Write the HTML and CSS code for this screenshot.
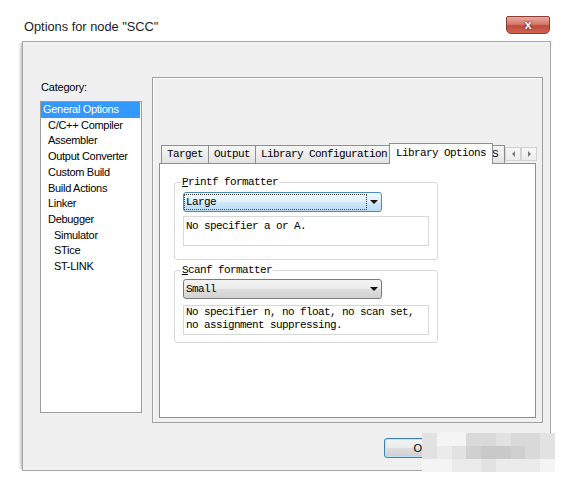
FILE: index.html
```html
<!DOCTYPE html>
<html>
<head>
<meta charset="utf-8">
<title>Options for node "SCC"</title>
<link rel="stylesheet" href="styles.css">
</head>
<body>
<div class="window">
  <div class="titlebar">
    <span class="title">Options for node "SCC"</span>
    <span class="close">x</span>
  </div>
  <div class="client">
    <div class="main">
      <div class="left">
        <div class="cat-label">Category:</div>
        <ul class="list">
          <li class="item sel">General Options</li>
          <li class="item lvl1">C/C++ Compiler</li>
          <li class="item lvl1">Assembler</li>
          <li class="item lvl1">Output Converter</li>
          <li class="item lvl1">Custom Build</li>
          <li class="item lvl1">Build Actions</li>
          <li class="item lvl1">Linker</li>
          <li class="item lvl1">Debugger</li>
          <li class="item lvl2">Simulator</li>
          <li class="item lvl2">STice</li>
          <li class="item lvl2">ST-LINK</li>
        </ul>
      </div>
      <div class="panel">
        <div class="strip">
          <div class="tabs">
            <div class="tab">Target</div>
            <div class="tab">Output</div>
            <div class="tab">Library Configuration</div>
            <div class="tab active">Library Options</div>
            <div class="tab clipped">S</div>
          </div>
          <div class="arrows">
            <span class="arrow arrow-left"></span>
            <span class="arrow arrow-right"></span>
          </div>
        </div>
        <div class="pane">
          <div class="group">
            <div class="legend"><u>P</u>rintf formatter</div>
            <div class="combo focus"><span class="combo-text">Large</span><span class="combo-btn"><i class="caret"></i></span></div>
            <div class="desc">No specifier a or A.</div>
          </div>
          <div class="group scanf">
            <div class="legend"><u>S</u>canf formatter</div>
            <div class="combo"><span class="combo-text">Small</span><span class="combo-btn"><i class="caret"></i></span></div>
            <div class="desc">No specifier n, no float, no scan set,<br>no assignment suppressing.</div>
          </div>
        </div>
      </div>
    </div>
    <div class="buttons">
      <button class="btn default">OK</button>
      <button class="btn">Cancel</button>
    </div>
  </div>
  <div class="mosaic">
    <i class="c"></i><i class="a"></i><i class="a"></i><i class="d"></i><i class="d"></i><i class="c"></i><i class="d"></i><i class="d"></i><i class="c"></i>
    <i class="c"></i><i class="b"></i><i class="c"></i><i class="e"></i><i class="f"></i><i class="f"></i><i class="e"></i><i class="d"></i><i class="c"></i>
    <i class="a"></i><i class="a"></i><i class="b"></i><i class="b"></i><i class="c"></i><i class="b"></i><i class="b"></i><i class="b"></i><i class="a"></i>
  </div>
</div>
</body>
</html>
```
FILE: styles.css
```css
* { box-sizing: border-box; }

body {
  margin: 0;
  background: #fff;
  font-family: "Liberation Sans", Arial, sans-serif;
  color: #000;
}

.window {
  position: relative;
  width: 563px;
  height: 479px;
}

/* title bar */
.titlebar {
  display: flex;
  justify-content: space-between;
  align-items: flex-start;
  margin-left: 22px;
  width: 529px;
  height: 41px;
}

.title {
  padding: 19px 0 0 2px;
  font-size: 12.8px;
  line-height: 16px;
  color: #1b1b1b;
}

.close {
  margin-top: 16px;
  margin-right: 1px;
  width: 44px;
  height: 18px;
  border: 1px solid #8b3b31;
  border-radius: 2px 2px 5px 5px;
  background: linear-gradient(#e8aa9e, #d57a6a 45%, #c24a3c 55%, #cf6553);
  color: #fff;
  font: bold 13px/15px "Liberation Sans", Arial, sans-serif;
  text-align: center;
  text-shadow: 0 0 2px #5a1a10, 0 0 1px #5a1a10;
}

/* dialog client area */
.client {
  margin-left: 22px;
  width: 529px;
  height: 430px;
  border: 1px solid #a8a8a8;
  background: #f0f0f0;
  padding: 35px 0 0 17px;
  box-shadow: -3px 0 3px -2px rgba(0, 0, 0, 0.35);
}

.main {
  display: flex;
}

.left {
  width: 102px;
  padding-top: 3px;
}

.cat-label {
  font-size: 11px;
  line-height: 14px;
  height: 14px;
  padding-left: 1px;
  letter-spacing: -0.2px;
}

.list {
  list-style: none;
  margin: 7px 0 0;
  padding: 0;
  height: 312px;
  border: 1px solid #9c9c9c;
  background: #fff;
}

.item {
  font-size: 11px;
  line-height: 15.7px;
  letter-spacing: -0.3px;
  white-space: nowrap;
}

.item.sel {
  padding-left: 2px;
  margin-right: 1px;
  background: #3399ff;
  color: #fff;
}

.item.lvl1 { padding-left: 7px; }
.item.lvl2 { padding-left: 13px; }

/* right panel with tab control */
.panel {
  margin-left: 10px;
  width: 391px;
  height: 346px;
  border: 1px solid #a0a0a0;
  box-shadow: inset 1px 1px 0 #fff;
  padding: 65px 0 0 6px;
}

.strip {
  position: relative;
  z-index: 1;
  display: flex;
  height: 21px;
  margin-left: 2px;
}

.tabs {
  display: flex;
  align-items: flex-start;
  width: 344px;
  height: 21px;
  overflow: hidden;
}

.tab {
  flex: none;
  margin-top: 2px;
  margin-right: -1px;
  height: 18px;
  border: 1px solid #8e8e8e;
  border-bottom: none;
  padding: 0 5px;
  font-family: "Liberation Mono", "Courier New", monospace;
  font-size: 11px;
  letter-spacing: -0.6px;
  line-height: 17px;
  background: linear-gradient(#f6f6f6, #e3e3e3);
  white-space: nowrap;
}

.tab.active {
  position: relative;
  z-index: 1;
  margin: 0 -3px 0 -3px;
  height: 21px;
  line-height: 18px;
  padding: 0 6px;
  background: #fff;
}

.tab.clipped {
  padding: 0 6px 0 1px;
}

.arrows {
  display: flex;
  margin-top: 4px;
  height: 14px;
}

.arrow {
  width: 16px;
  height: 14px;
  border: 1px solid #d2d2d2;
  background: linear-gradient(#f8f8f8, #ececec);
  display: flex;
  align-items: center;
  justify-content: center;
}

.arrow::before {
  content: "";
  border-top: 3px solid transparent;
  border-bottom: 3px solid transparent;
}

.arrow-left::before { border-right: 3px solid #7a7a7a; }
.arrow-right::before { border-left: 3px solid #7a7a7a; }

.pane {
  margin-top: -1px;
  width: 377px;
  height: 255px;
  border: 1px solid #8e8e8e;
  background: #fff;
  padding: 18px 0 0 14px;
}

/* group boxes */
.group {
  width: 264px;
  border: 1px solid #d5d9dc;
  border-radius: 3px;
  padding: 0 8px 13px;
  font-family: "Liberation Mono", "Courier New", monospace;
  font-size: 11px;
  letter-spacing: -0.6px;
}

.group.scanf {
  margin-top: 10px;
  padding-bottom: 7px;
}

.legend {
  display: table;
  margin: -7px 0 0 -2px;
  padding: 0 1px;
  background: #fff;
  line-height: 12px;
}

.combo {
  display: flex;
  align-items: center;
  margin-top: 4px;
  width: 199px;
  height: 20px;
  border: 1px solid #7a7a7a;
  border-radius: 3px;
  background: linear-gradient(#f3f3f3 0%, #ebebeb 50%, #dedede 51%, #d2d2d2 100%);
}

.scanf .combo { margin-top: 3px; }

.combo.focus {
  border-color: #4f8cbc;
  background: linear-gradient(#eef7fd 0%, #e0f0fb 50%, #cfe7f8 51%, #bcdcf3 100%);
}

.combo-text {
  flex: 1;
  height: 14px;
  margin: 0 0 0 1px;
  padding-left: 1px;
  line-height: 14px;
}

.focus .combo-text {
  outline: 1px dotted #444;
}

.combo-btn {
  width: 15px;
  height: 100%;
  display: flex;
  align-items: center;
  justify-content: center;
}

.caret {
  width: 0;
  height: 0;
  border-left: 4px solid transparent;
  border-right: 4px solid transparent;
  border-top: 4px solid #111;
}

.desc {
  margin-top: 4px;
  width: 246px;
  height: 30px;
  border: 1px solid #d8d8d8;
  padding: 3px 0 0 2px;
  line-height: 13px;
  white-space: nowrap;
}

.scanf .desc {
  margin-top: 6px;
  padding-top: 0;
}

/* bottom buttons */
.buttons {
  display: flex;
  gap: 6px;
  margin-top: 15px;
  padding-left: 344px;
}

.btn {
  width: 75px;
  height: 20px;
  padding: 0;
  border: 1px solid #707070;
  border-radius: 3px;
  background: linear-gradient(#f2f2f2 0%, #ebebeb 50%, #dddddd 51%, #cfcfcf 100%);
  font: 11px "Liberation Sans", Arial, sans-serif;
  color: #000;
}

.btn.default {
  border-color: #3c7fb1;
  box-shadow: inset 0 0 0 1px #bfe3f7;
}

/* pixelated (blurred) region over the buttons */
.mosaic {
  position: absolute;
  left: 422px;
  top: 433px;
  width: 133px;
  height: 39px;
  display: grid;
  grid-template-columns: repeat(9, 1fr);
  grid-template-rows: repeat(3, 1fr);
  filter: blur(0.7px);
}

.mosaic .a { background: #f4f4f4; }
.mosaic .b { background: #ebebeb; }
.mosaic .c { background: #e2e2e2; }
.mosaic .d { background: #d9d9d9; }
.mosaic .e { background: #d0d0d0; }
.mosaic .f { background: #c9c9c9; }
```
